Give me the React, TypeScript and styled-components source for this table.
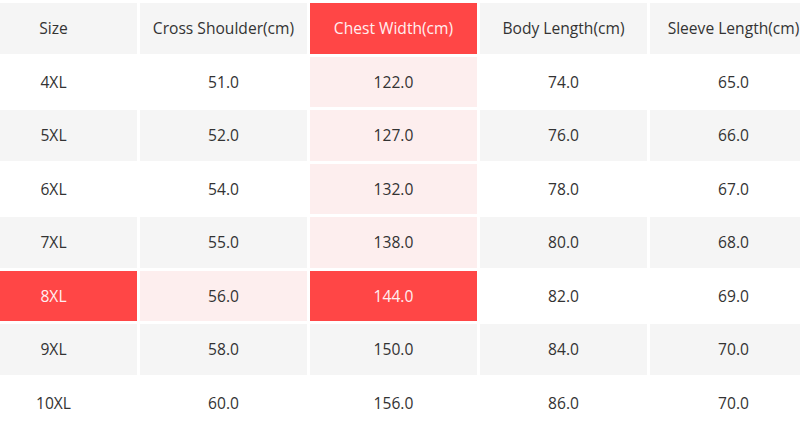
import React from 'react'
import styled, { createGlobalStyle, css } from 'styled-components'

const GlobalStyle = createGlobalStyle`
  html, body {
    margin: 0;
    padding: 0;
    background: #ffffff;
    overflow: hidden;
  }
  body {
    font-family: 'Open Sans', 'Noto Sans', sans-serif;
  }
`

const Table = styled.div`
  display: grid;
  grid-template-columns: repeat(5, 167px);
  grid-auto-rows: 50.5px;
  gap: 3px;
  padding-top: 3px;
  margin-left: -30px;
  width: 850px;
`

type Tone = 'plain' | 'stripe' | 'soft' | 'active'

const tones = {
  plain: css`
    background: #ffffff;
    color: #333333;
  `,
  stripe: css`
    background: #f5f5f5;
    color: #333333;
  `,
  soft: css`
    background: #fdeeee;
    color: #333333;
  `,
  active: css`
    background: #ff4646;
    color: #ffeef0;
  `,
}

const Cell = styled.div<{ $tone: Tone }>`
  display: flex;
  align-items: center;
  justify-content: center;
  font-size: 15.6px;
  white-space: nowrap;
  ${(p) => tones[p.$tone]}
`

const headers = ['Size', 'Cross Shoulder(cm)', 'Chest Width(cm)', 'Body Length(cm)', 'Sleeve Length(cm)']

const rows = [
  ['4XL', '51.0', '122.0', '74.0', '65.0'],
  ['5XL', '52.0', '127.0', '76.0', '66.0'],
  ['6XL', '54.0', '132.0', '78.0', '67.0'],
  ['7XL', '55.0', '138.0', '80.0', '68.0'],
  ['8XL', '56.0', '144.0', '82.0', '69.0'],
  ['9XL', '58.0', '150.0', '84.0', '70.0'],
  ['10XL', '60.0', '156.0', '86.0', '70.0'],
]

// highlighted cell: row 8XL, column Chest Width
const activeRow = 4
const activeCol = 2

function toneFor(r: number, c: number): Tone {
  // r = -1 for header
  if (r === -1 && c === activeCol) return 'active'
  if (r === activeRow && (c === 0 || c === activeCol)) return 'active'
  if (c === activeCol && r < activeRow) return 'soft'
  if (r === activeRow && c < activeCol) return 'soft'
  return r % 2 === 0 ? 'plain' : 'stripe'
}

export default function App() {
  return (
    <>
      <GlobalStyle />
      <Table>
        {headers.map((h, c) => (
          <Cell key={h} $tone={toneFor(-1, c)}>
            {h}
          </Cell>
        ))}
        {rows.map((row, r) =>
          row.map((v, c) => (
            <Cell key={`${r}-${c}`} $tone={toneFor(r, c)}>
              {v}
            </Cell>
          ))
        )}
      </Table>
    </>
  )
}
